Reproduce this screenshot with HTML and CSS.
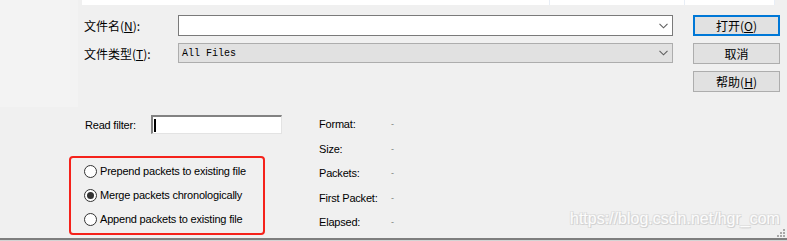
FILE: index.html
```html
<!DOCTYPE html>
<html>
<head>
<meta charset="utf-8">
<link rel="stylesheet" href="styles.css">
</head>
<body>
<div class="dialog">
  <div class="top">
    <div class="sidebar"></div>
    <div class="main">
      <div class="list-strip">
        <div class="col c1"></div>
        <div class="col c2"></div>
        <div class="col c3"></div>
      </div>
      <div class="form">
        <div class="cjk-label">文件名(<u>N</u>):</div>
        <div class="combo combo-edit">
          <span class="combo-text"></span>
          <svg class="chev" width="9" height="6" viewBox="0 0 9 6"><path d="M0.5 0.8 L4.5 4.8 L8.5 0.8" fill="none" stroke="#5f5f5f" stroke-width="1.1"/></svg>
        </div>
        <button class="btn btn-default">打开(<u>O</u>)</button>

        <div class="cjk-label">文件类型(<u>T</u>):</div>
        <div class="combo combo-list">
          <span class="combo-text mono">All Files</span>
          <svg class="chev" width="9" height="6" viewBox="0 0 9 6"><path d="M0.5 0.8 L4.5 4.8 L8.5 0.8" fill="none" stroke="#5f5f5f" stroke-width="1.1"/></svg>
        </div>
        <button class="btn">取消</button>

        <div></div>
        <div></div>
        <button class="btn">帮助(<u>H</u>)</button>
      </div>
    </div>
  </div>

  <div class="bottom">
    <div class="left-col">
      <div class="filter-row">
        <span class="lbl">Read filter:</span>
        <div class="filter-input"><span class="caret"></span></div>
      </div>
      <div class="radio-box">
        <label class="radio-row"><span class="radio"></span><span class="lbl">Prepend packets to existing file</span></label>
        <label class="radio-row"><span class="radio checked"></span><span class="lbl">Merge packets chronologically</span></label>
        <label class="radio-row"><span class="radio"></span><span class="lbl">Append packets to existing file</span></label>
      </div>
    </div>
    <div class="info">
      <span class="lbl">Format:</span><span class="dash">-</span>
      <span class="lbl">Size:</span><span class="dash">-</span>
      <span class="lbl">Packets:</span><span class="dash">-</span>
      <span class="lbl">First Packet:</span><span class="dash">-</span>
      <span class="lbl">Elapsed:</span><span class="dash">-</span>
    </div>
    <div class="watermark">https://blog.csdn.net/hgr_com</div>
    <svg class="grip" width="10" height="10" viewBox="0 0 10 10">
      <rect x="7" y="1" width="2" height="2" fill="#a8a8a8"/>
      <rect x="4" y="4" width="2" height="2" fill="#a8a8a8"/>
      <rect x="7" y="4" width="2" height="2" fill="#a8a8a8"/>
      <rect x="1" y="7" width="2" height="2" fill="#a8a8a8"/>
      <rect x="4" y="7" width="2" height="2" fill="#a8a8a8"/>
      <rect x="7" y="7" width="2" height="2" fill="#a8a8a8"/>
    </svg>
  </div>
  <div class="frame-bottom"></div>
</div>
</body>
</html>
```

FILE: styles.css
```css
html, body {
  margin: 0;
  padding: 0;
  background: #f0f0f0;
}
.dialog {
  width: 787px;
  height: 241px;
  overflow: hidden;
  display: flex;
  flex-direction: column;
  font-family: "Liberation Sans", Arial, sans-serif;
  font-size: 11px;
  color: #000;
}
.lbl { letter-spacing: -0.2px; }
.top {
  display: flex;
  height: 107px;
  flex: none;
}
.sidebar {
  width: 78px;
  flex: none;
  background: #f3f3f3;
}
.main {
  flex: 1;
  min-width: 0;
}
.list-strip {
  margin-left: 4px;
  width: 693px;
  height: 5px;
  background: #fff;
  display: flex;
}
.col {
  height: 5px;
  border-right: 1px solid #e8eef6;
  box-sizing: border-box;
}
.c1 { width: 469px; }
.c2 { width: 135px; }
.c3 { width: 90px; }

.form {
  margin-top: 10px;
  padding-left: 6px;
  display: grid;
  grid-template-columns: 74px 495px 87px;
  column-gap: 20px;
  grid-template-rows: 21px 21px 21px;
  row-gap: 7px;
  align-items: center;
}
.cjk-label {
  font-family: "Noto Sans CJK SC", "Noto Sans", sans-serif;
  font-size: 12px;
  color: #000;
  line-height: 21px;
  white-space: nowrap;
}
u { text-decoration: underline; text-underline-offset: 1px; }
.combo {
  height: 21px;
  box-sizing: border-box;
  display: flex;
  align-items: center;
  justify-content: space-between;
  padding: 0 4px 0 3px;
}
.combo-edit {
  background: #fff;
  border: 1px solid #7a7a7a;
}
.combo-list {
  background: #e1e1e1;
  border: 1px solid #adadad;
  height: 20px;
  align-self: start;
}
.mono {
  font-family: "Liberation Mono", "DejaVu Sans Mono", monospace;
  font-size: 10px;
}
.chev { display: block; }
.btn {
  height: 21px;
  width: 87px;
  box-sizing: border-box;
  background: #e1e1e1;
  border: 1px solid #adadad;
  font-family: "Noto Sans CJK SC", "Noto Sans", sans-serif;
  font-size: 12px;
  color: #000;
  padding: 0;
  line-height: 18px;
}
.btn-default {
  border: 2px solid #0078d7;
}

.bottom {
  position: relative;
  flex: 1;
  display: flex;
}
.left-col {
  width: 319px;
  flex: none;
}
.filter-row {
  display: flex;
  align-items: center;
  margin-top: 8px;
  margin-left: 85px;
  height: 19px;
}
.filter-row .lbl { width: 66px; }
.filter-input {
  width: 131px;
  height: 19px;
  box-sizing: border-box;
  background: #fff;
  border-top: 2px solid #828282;
  border-left: 2px solid #828282;
  border-right: 1px solid #e3e3e3;
  border-bottom: 1px solid #e3e3e3;
  display: flex;
  align-items: center;
  padding-left: 1px;
}
.caret {
  width: 2px;
  height: 13px;
  background: #000;
}
.radio-box {
  margin-top: 22px;
  margin-left: 69px;
  width: 196px;
  height: 79px;
  box-sizing: border-box;
  border: 2px solid #f5221b;
  border-radius: 4px;
  display: flex;
  flex-direction: column;
  padding: 1px 0 0 13px;
}
.radio-row {
  display: flex;
  align-items: center;
  height: 24px;
}
.radio {
  width: 13px;
  height: 13px;
  box-sizing: border-box;
  border: 1px solid #333;
  border-radius: 50%;
  background: #fff;
  margin-right: 3px;
  display: flex;
  align-items: center;
  justify-content: center;
}
.radio.checked::after {
  content: "";
  width: 7px;
  height: 7px;
  border-radius: 50%;
  background: #333;
}
.info {
  display: grid;
  grid-template-columns: 72px 10px;
  grid-auto-rows: 24.5px;
  align-items: center;
  margin-top: 5px;
  align-content: start;
}
.dash { color: #808080; font-size: 9px; }
.watermark {
  position: absolute;
  left: 570px;
  top: 103px;
  font-family: "Liberation Sans", Arial, sans-serif;
  font-size: 16px;
  color: #fcfcfc;
  text-shadow: 1px 1px 0 #d2d2d2, -1px -1px 0 #e2e2e2, 1px -1px 0 #dddddd, -1px 1px 0 #dddddd;
  white-space: nowrap;
}
.grip {
  position: absolute;
  right: 1px;
  bottom: 0px;
}
.frame-bottom {
  height: 3px;
  flex: none;
  border-top: 2px solid #7e7e7e;
  background: #d4d4d4;
  box-sizing: border-box;
}
```
